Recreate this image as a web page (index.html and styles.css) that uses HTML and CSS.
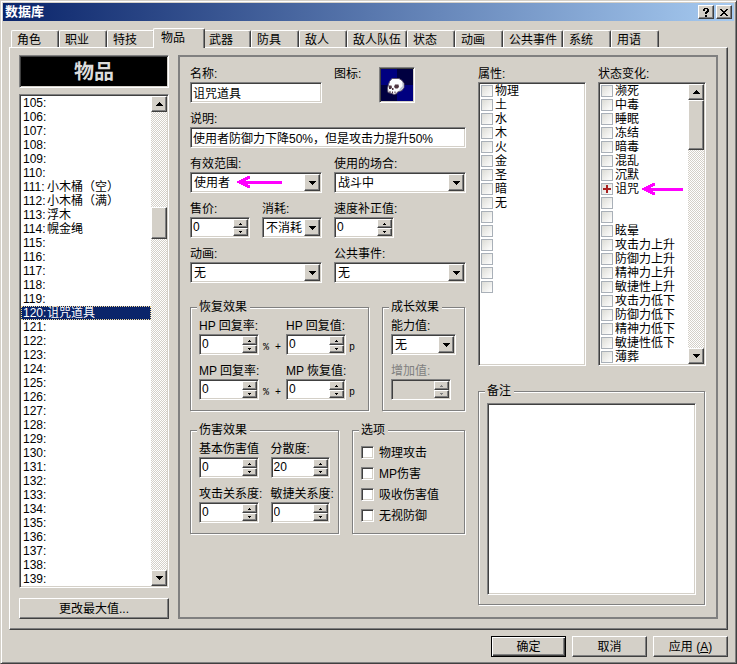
FILE: index.html
```html
<!DOCTYPE html>
<html lang="zh-CN">
<head>
<meta charset="utf-8">
<meta name="viewport" content="width=device-width, initial-scale=1">
<title>数据库</title>
<link rel="stylesheet" href="styles.css">
</head>
<body>
<svg class="sprite" aria-hidden="true">
  <symbol id="up" viewBox="0 0 7 4"><path d="M3 0h1v1h1v1h1v1h1v1H0V3h1V2h1V1h1z"/></symbol>
  <symbol id="down" viewBox="0 0 7 4"><path d="M0 0h7v1H6v1H5v1H4v1H3V3H2V2H1V1H0z"/></symbol>
  <symbol id="up-s" viewBox="0 0 3 2"><path d="M1 0h1v1h1v1H0V1h1z"/></symbol>
  <symbol id="down-s" viewBox="0 0 3 2"><path d="M0 0h3v1H2v1H1V1H0z"/></symbol>
</svg>
<div class="window">
  <header class="titlebar">
    <h1>数据库</h1>
    <button type="button" aria-label="帮助"><svg width="6" height="9" viewBox="0 0 6 9"><path d="M1 0h4v1h1v3H5v1H4v1H2V4h1V3h1V1H2v2H0V1h1zM2 7h2v2H2z"/></svg></button>
    <button type="button" aria-label="关闭"><svg width="8" height="7" viewBox="0 0 8 7"><path d="M0 0h2v1h1v1h2V1h1V0h2v1H7v1H6v1H5v1h1v1h1v1h1v1H6V6H5V5H3v1H2v1H0V6h1V5h1V4h1V3H2V2H1V1H0z"/></svg></button>
  </header>

  <main class="body">
    <div class="tabs" role="tablist">
      <button type="button" class="tab" role="tab">角色</button>
      <button type="button" class="tab" role="tab">职业</button>
      <button type="button" class="tab" role="tab">特技</button>
      <button type="button" class="tab selected" role="tab" aria-selected="true">物品</button>
      <button type="button" class="tab" role="tab">武器</button>
      <button type="button" class="tab" role="tab">防具</button>
      <button type="button" class="tab" role="tab">敌人</button>
      <button type="button" class="tab wide" role="tab">敌人队伍</button>
      <button type="button" class="tab" role="tab">状态</button>
      <button type="button" class="tab" role="tab">动画</button>
      <button type="button" class="tab wide" role="tab">公共事件</button>
      <button type="button" class="tab" role="tab">系统</button>
      <button type="button" class="tab" role="tab">用语</button>
    </div>

    <div class="page">
      <section class="sidebar">
        <h2 class="banner">物品</h2>
        <div class="listbox">
          <ol class="items">
            <li><b>105:</b></li>
            <li><b>106:</b></li>
            <li><b>107:</b></li>
            <li><b>108:</b></li>
            <li><b>109:</b></li>
            <li><b>110:</b></li>
            <li><b>111:</b>小木桶（空）</li>
            <li><b>112:</b>小木桶（满）</li>
            <li><b>113:</b>浮木</li>
            <li><b>114:</b>幌金绳</li>
            <li><b>115:</b></li>
            <li><b>116:</b></li>
            <li><b>117:</b></li>
            <li><b>118:</b></li>
            <li><b>119:</b></li>
            <li class="current"><b>120:</b>诅咒道具</li>
            <li><b>121:</b></li>
            <li><b>122:</b></li>
            <li><b>123:</b></li>
            <li><b>124:</b></li>
            <li><b>125:</b></li>
            <li><b>126:</b></li>
            <li><b>127:</b></li>
            <li><b>128:</b></li>
            <li><b>129:</b></li>
            <li><b>130:</b></li>
            <li><b>131:</b></li>
            <li><b>132:</b></li>
            <li><b>133:</b></li>
            <li><b>134:</b></li>
            <li><b>135:</b></li>
            <li><b>136:</b></li>
            <li><b>137:</b></li>
            <li><b>138:</b></li>
            <li><b>139:</b></li>
          </ol>
          <div class="scrollbar">
            <button type="button" aria-label="向上滚动"><svg width="7" height="4"><use href="#up"/></svg></button>
            <div class="track items-track"><div class="thumb"></div></div>
            <button type="button" aria-label="向下滚动"><svg width="7" height="4"><use href="#down"/></svg></button>
          </div>
        </div>
        <button type="button" class="button">更改最大值...</button>
      </section>

      <section class="panel">
        <div class="form">
          <div class="row halves">
            <div class="field"><label for="name">名称:</label><input class="text" id="name" type="text" value="诅咒道具"></div>
            <div class="icon-field">
              <span>图标:</span>
              <button type="button" class="icon-button" aria-label="图标">
                <svg width="32" height="32" viewBox="0 0 32 32">
                  <path fill="#000080" d="M0 0h16v16H0zM16 16h16v16H16z"/>
                  <path fill="#000040" d="M16 0h16v16H16zM0 16h16v16H0z"/>
                  <g class="smooth">
                    <path fill="#fafcff" stroke="#5c5068" d="M11 9.500h7l3 2 2 3v4l-2 3-3 1-2 1v1l-3 1-2-1-4-1-.5-4 1-4 1-3z"/>
                    <path fill="#b8c4d4" d="M21 12l1.500 3v3l-2 3-3 1 2-3 2-2z"/>
                    <path fill="#4c3440" d="M8 16.500h2.500l.5 2-1 1.500H8zM14 15.500h3.500l.5 2.500-1.500 1.500h-2L13 18z"/>
                    <path fill="#4c3440" d="M11 19h1.500v2H11zM8.500 22h1v2h-1zM11 22.500h1V24h-1zM13.500 22.500h1V24h-1z"/>
                  </g>
                </svg>
              </button>
            </div>
          </div>
          <div class="field"><label for="desc">说明:</label><input class="text" id="desc" type="text" value="使用者防御力下降50%，但是攻击力提升50%"></div>
          <div class="row halves">
            <div class="field"><label for="scope">有效范围:</label>
              <div class="combo"><select id="scope"><option>使用者</option></select><span class="drop"><svg width="7" height="4"><use href="#down"/></svg></span>
                <svg class="mark scope-mark" width="46" height="14" viewBox="0 0 46 14" aria-hidden="true"><path d="M45 7H3M13 2L2 7l11 5"/></svg></div></div>
            <div class="field"><label for="occasion">使用的场合:</label>
              <div class="combo"><select id="occasion"><option>战斗中</option></select><span class="drop"><svg width="7" height="4"><use href="#down"/></svg></span></div></div>
          </div>
          <div class="row quarters">
            <div class="field"><label for="price">售价:</label>
              <div class="spin"><input id="price" type="text" value="0"><div class="steps"><button type="button" aria-label="增加"><svg width="3" height="2"><use href="#up-s"/></svg></button><button type="button" aria-label="减少"><svg width="3" height="2"><use href="#down-s"/></svg></button></div></div></div>
            <div class="field"><label for="consume">消耗:</label>
              <div class="combo"><select id="consume"><option>不消耗</option></select><span class="drop"><svg width="7" height="4"><use href="#down"/></svg></span></div></div>
            <div class="field"><label for="speed">速度补正值:</label>
              <div class="spin"><input id="speed" type="text" value="0"><div class="steps"><button type="button" aria-label="增加"><svg width="3" height="2"><use href="#up-s"/></svg></button><button type="button" aria-label="减少"><svg width="3" height="2"><use href="#down-s"/></svg></button></div></div></div>
          </div>
          <div class="row halves">
            <div class="field"><label for="anim">动画:</label>
              <div class="combo"><select id="anim"><option>无</option></select><span class="drop"><svg width="7" height="4"><use href="#down"/></svg></span></div></div>
            <div class="field"><label for="event">公共事件:</label>
              <div class="combo"><select id="event"><option>无</option></select><span class="drop"><svg width="7" height="4"><use href="#down"/></svg></span></div></div>
          </div>

          <div class="groups">
            <div class="row recovery-row">
              <fieldset>
                <legend>恢复效果</legend>
                <div class="pair">
                  <div class="field"><label for="hp-rate">HP 回复率:</label>
                    <div class="spin"><input id="hp-rate" type="text" value="0"><div class="steps"><button type="button" aria-label="增加"><svg width="3" height="2"><use href="#up-s"/></svg></button><button type="button" aria-label="减少"><svg width="3" height="2"><use href="#down-s"/></svg></button></div></div></div>
                  <span class="unit plus">% +</span>
                  <div class="field"><label for="hp-value">HP 回复值:</label>
                    <div class="spin"><input id="hp-value" type="text" value="0"><div class="steps"><button type="button" aria-label="增加"><svg width="3" height="2"><use href="#up-s"/></svg></button><button type="button" aria-label="减少"><svg width="3" height="2"><use href="#down-s"/></svg></button></div></div></div>
                  <span class="unit">p</span>
                </div>
                <div class="pair">
                  <div class="field"><label for="mp-rate">MP 回复率:</label>
                    <div class="spin"><input id="mp-rate" type="text" value="0"><div class="steps"><button type="button" aria-label="增加"><svg width="3" height="2"><use href="#up-s"/></svg></button><button type="button" aria-label="减少"><svg width="3" height="2"><use href="#down-s"/></svg></button></div></div></div>
                  <span class="unit plus">% +</span>
                  <div class="field"><label for="mp-value">MP 恢复值:</label>
                    <div class="spin"><input id="mp-value" type="text" value="0"><div class="steps"><button type="button" aria-label="增加"><svg width="3" height="2"><use href="#up-s"/></svg></button><button type="button" aria-label="减少"><svg width="3" height="2"><use href="#down-s"/></svg></button></div></div></div>
                  <span class="unit">p</span>
                </div>
              </fieldset>
              <fieldset class="growth">
                <legend>成长效果</legend>
                <div class="field"><label for="stat">能力值:</label>
                  <div class="combo"><select id="stat"><option>无</option></select><span class="drop"><svg width="7" height="4"><use href="#down"/></svg></span></div></div>
                <div class="field disabled"><label for="gain">增加值:</label>
                  <div class="spin"><input id="gain" type="text" disabled><div class="steps"><button type="button" aria-label="增加" disabled><svg width="3" height="2"><use href="#up-s"/></svg></button><button type="button" aria-label="减少" disabled><svg width="3" height="2"><use href="#down-s"/></svg></button></div></div></div>
              </fieldset>
            </div>
            <div class="row damage-row">
              <fieldset>
                <legend>伤害效果</legend>
                <div class="pair spaced">
                  <div class="field"><label for="base">基本伤害值</label>
                    <div class="spin"><input id="base" type="text" value="0"><div class="steps"><button type="button" aria-label="增加"><svg width="3" height="2"><use href="#up-s"/></svg></button><button type="button" aria-label="减少"><svg width="3" height="2"><use href="#down-s"/></svg></button></div></div></div>
                  <div class="field"><label for="variance">分散度:</label>
                    <div class="spin"><input id="variance" type="text" value="20"><div class="steps"><button type="button" aria-label="增加"><svg width="3" height="2"><use href="#up-s"/></svg></button><button type="button" aria-label="减少"><svg width="3" height="2"><use href="#down-s"/></svg></button></div></div></div>
                </div>
                <div class="pair spaced">
                  <div class="field"><label for="atk-f">攻击关系度:</label>
                    <div class="spin"><input id="atk-f" type="text" value="0"><div class="steps"><button type="button" aria-label="增加"><svg width="3" height="2"><use href="#up-s"/></svg></button><button type="button" aria-label="减少"><svg width="3" height="2"><use href="#down-s"/></svg></button></div></div></div>
                  <div class="field"><label for="agi-f">敏捷关系度:</label>
                    <div class="spin"><input id="agi-f" type="text" value="0"><div class="steps"><button type="button" aria-label="增加"><svg width="3" height="2"><use href="#up-s"/></svg></button><button type="button" aria-label="减少"><svg width="3" height="2"><use href="#down-s"/></svg></button></div></div></div>
                </div>
              </fieldset>
              <fieldset class="options">
                <legend>选项</legend>
                <label><input type="checkbox">物理攻击</label>
                <label><input type="checkbox">MP伤害</label>
                <label><input type="checkbox">吸收伤害值</label>
                <label><input type="checkbox">无视防御</label>
              </fieldset>
            </div>
          </div>
        </div>

        <div class="side">
          <div class="lists">
            <div class="field"><span class="caption">属性:</span>
              <div class="listbox">
                <div class="checks">
                  <label><input type="checkbox">物理</label>
                  <label><input type="checkbox">土</label>
                  <label><input type="checkbox">水</label>
                  <label><input type="checkbox">木</label>
                  <label><input type="checkbox">火</label>
                  <label><input type="checkbox">金</label>
                  <label><input type="checkbox">圣</label>
                  <label><input type="checkbox">暗</label>
                  <label><input type="checkbox">无</label>
                  <label><input type="checkbox"></label>
                  <label><input type="checkbox"></label>
                  <label><input type="checkbox"></label>
                  <label><input type="checkbox"></label>
                  <label><input type="checkbox"></label>
                  <label><input type="checkbox"></label>
                </div>
              </div>
            </div>
            <div class="field"><span class="caption">状态变化:</span>
              <div class="listbox">
                <div class="checks">
                  <label><input type="checkbox">濒死</label>
                  <label><input type="checkbox">中毒</label>
                  <label><input type="checkbox">睡眠</label>
                  <label><input type="checkbox">冻结</label>
                  <label><input type="checkbox">暗毒</label>
                  <label><input type="checkbox">混乱</label>
                  <label><input type="checkbox">沉默</label>
                  <label class="marked"><input type="checkbox" checked>诅咒<svg class="mark state-mark" width="42" height="14" viewBox="0 0 42 14" aria-hidden="true"><path d="M41 7H3M13 2L2 7l11 5"/></svg></label>
                  <label><input type="checkbox"></label>
                  <label><input type="checkbox"></label>
                  <label><input type="checkbox">眩晕</label>
                  <label><input type="checkbox">攻击力上升</label>
                  <label><input type="checkbox">防御力上升</label>
                  <label><input type="checkbox">精神力上升</label>
                  <label><input type="checkbox">敏捷性上升</label>
                  <label><input type="checkbox">攻击力低下</label>
                  <label><input type="checkbox">防御力低下</label>
                  <label><input type="checkbox">精神力低下</label>
                  <label><input type="checkbox">敏捷性低下</label>
                  <label><input type="checkbox">薄葬</label>
                </div>
                <div class="scrollbar">
                  <button type="button" aria-label="向上滚动"><svg width="7" height="4"><use href="#up"/></svg></button>
                  <div class="track states-track"><div class="thumb"></div></div>
                  <button type="button" aria-label="向下滚动"><svg width="7" height="4"><use href="#down"/></svg></button>
                </div>
              </div>
            </div>
          </div>
          <fieldset class="memo">
            <legend>备注</legend>
            <textarea aria-label="备注"></textarea>
          </fieldset>
        </div>
      </section>
    </div>

    <footer class="actions">
      <button type="button" class="button default">确定</button>
      <button type="button" class="button">取消</button>
      <button type="button" class="button">应用 (<u>A</u>)</button>
    </footer>
  </main>
</div>
</body>
</html>
```
FILE: styles.css
```css
:root {
  --face: #d4d0c8;
  --light: #fff;
  --shadow: #808080;
  --dark: #404040;
  --navy: #0a246a;
}

* { box-sizing: border-box; }

body {
  margin: 0;
  background: var(--face);
  color: #000;
  font: 12px/14px "Liberation Sans", "Noto Sans CJK SC", sans-serif;
}

button, input, select, textarea {
  margin: 0;
  padding: 0;
  border: 0;
  border-radius: 0;
  background: none;
  color: inherit;
  font: inherit;
  appearance: none;
  outline: 0;
}

svg { display: block; shape-rendering: crispEdges; }
.smooth { shape-rendering: auto; }
.sprite { position: absolute; width: 0; height: 0; }

/* Window frame */
.window {
  min-height: 100vh;
  display: flex;
  flex-direction: column;
  padding: 1px;
  border: 1px solid;
  border-color: var(--face) var(--dark) var(--dark) var(--face);
  box-shadow: inset 1px 1px var(--light), inset -1px -1px var(--shadow);
  background: var(--face);
}

.titlebar {
  display: flex;
  align-items: center;
  gap: 2px;
  height: 18px;
  margin: 1px 1px 0;
  padding: 0 2px;
  background: linear-gradient(to right, #0a246a, #a6caf0);
}
.titlebar h1 {
  flex: 1;
  margin: 0;
  color: #fff;
  font-size: 13px;
  line-height: 18px;
  font-weight: 700;
}
.titlebar button { width: 16px; height: 14px; }

/* Raised and sunken edges */
.titlebar button, .scrollbar button, .thumb, .drop, .steps button, .button {
  display: flex;
  align-items: center;
  justify-content: center;
  background: var(--face);
  border: 1px solid;
  border-color: var(--light) var(--dark) var(--dark) var(--light);
  box-shadow: inset -1px -1px var(--shadow);
}
.text, .combo, .spin, .listbox, .banner, .icon-button, .memo textarea {
  border: 1px solid;
  border-color: var(--shadow) var(--light) var(--light) var(--shadow);
  box-shadow: inset 1px 1px var(--dark), inset -1px -1px var(--face);
  padding: 1px;
  background: #fff;
}

.body {
  flex: 1;
  display: flex;
  flex-direction: column;
  padding: 7px 7px 5px;
}

/* Tabs */
.tabs {
  display: flex;
  align-items: flex-end;
  height: 19px;
  padding-left: 2px;
}
.tab {
  width: 48px;
  height: 17px;
  padding: 2px 0 0 5px;
  border: 1px solid;
  border-color: var(--light) var(--dark) transparent var(--light);
  border-bottom: 0;
  border-radius: 2px 2px 0 0;
  box-shadow: inset -1px 0 var(--shadow);
  text-align: left;
  white-space: nowrap;
}
.tab.wide { width: 60px; }
.tab.selected {
  position: relative;
  width: 52px;
  height: 20px;
  margin: 0 -2px -1px;
  padding: 0 0 1px 7px;
  background: var(--face);
}

.page {
  flex: 1;
  display: flex;
  gap: 9px;
  padding: 7px 9px 10px;
  border: 1px solid;
  border-color: var(--light) var(--dark) var(--dark) var(--light);
  box-shadow: inset -1px -1px var(--shadow);
}

/* Item list */
.sidebar {
  width: 150px;
  display: flex;
  flex-direction: column;
}
.banner {
  height: 33px;
  margin: 0 0 6px;
  background: #000;
  color: #dcdcdc;
  font-size: 20px;
  line-height: 30px;
  font-weight: 700;
  text-align: center;
}
.listbox { display: flex; }
.items {
  flex: 1;
  margin: 0;
  padding: 0;
  list-style: none;
}
.items li {
  display: flex;
  height: 14px;
  padding-left: 2px;
  white-space: nowrap;
}
.items b { width: 24px; font-weight: 400; }
.items .current {
  background: var(--navy);
  color: #fff;
  outline: 1px dotted #f5db95;
  outline-offset: -1px;
}
.sidebar .button { margin-top: 10px; }

.scrollbar {
  width: 16px;
  display: flex;
  flex-direction: column;
}
.scrollbar button { height: 16px; }
.track {
  flex: 1;
  display: grid;
  background: repeating-conic-gradient(#fff 0 25%, var(--face) 0 50%) 0 0 / 2px 2px;
}
.thumb { grid-row: 2; }
.items-track { grid-template-rows: 95fr 32px 331fr; }
.states-track { grid-template-rows: 0 50px 1fr; }

.button {
  height: 21px;
  white-space: pre;
}

/* Editor panel */
.panel {
  flex: 1;
  display: grid;
  grid-template-columns: 276fr 228fr;
  gap: 12px;
  padding: 10px 10px 12px;
  border: 2px solid var(--shadow);
}
.form {
  display: flex;
  flex-direction: column;
  gap: 9px;
  min-width: 0;
}
.row { display: grid; gap: 12px; }
.halves { grid-template-columns: 1fr 1fr; }
.quarters { grid-template-columns: repeat(4, 1fr); }

.field { min-width: 0; }
.field > label, .caption {
  display: block;
  height: 15px;
  white-space: nowrap;
}
.text {
  display: block;
  width: 100%;
  height: 21px;
  padding: 1px 2px 2px;
}

.icon-field { display: flex; gap: 12px; }
.icon-field span { width: 33px; }
.icon-button { width: 36px; height: 36px; }

.combo, .spin {
  position: relative;
  display: flex;
  height: 21px;
}
.combo select {
  flex: 1;
  min-width: 0;
  padding: 0 0 0 2px;
}
.drop { width: 16px; }
.spin input {
  flex: 1;
  min-width: 0;
  padding: 0 0 2px 1px;
}
.steps {
  width: 15px;
  display: grid;
  grid-template-rows: 9px 8px;
}

.disabled { color: var(--shadow); fill: var(--shadow); }
.disabled .spin { background: var(--face); }

/* Etched group boxes */
.groups {
  display: flex;
  flex-direction: column;
  gap: 12px;
  margin-top: 8px;
}
.recovery-row { grid-template-columns: 180fr 84fr; }
.damage-row { grid-template-columns: 150fr 114fr; }
fieldset {
  min-width: 0;
  margin: 0 1px 0 0;
  padding: 4px 8px 10px;
  border: 1px solid var(--shadow);
  box-shadow: 1px 1px var(--light), inset 1px 1px var(--light);
}
legend {
  height: 15px;
  margin-left: -2px;
  padding: 0 3px 0 2px;
  background: var(--face);
}
.growth .disabled, .pair + .pair { margin-top: 9px; }
.growth .spin { width: 60px; }
.pair { display: flex; }
.pair .field { width: 60px; }
.pair.spaced { gap: 12px; }
.unit {
  align-self: flex-end;
  padding-left: 3px;
  font: 10px/14px "Liberation Mono", monospace;
}
.unit.plus { width: 27px; padding-left: 4px; white-space: nowrap; }

.options { padding-bottom: 0; }
.options label {
  display: flex;
  align-items: center;
  gap: 5px;
  height: 21px;
}
.options input {
  width: 13px;
  height: 13px;
  border: 1px solid;
  border-color: var(--shadow) var(--light) var(--light) var(--shadow);
  box-shadow: inset 1px 1px var(--dark), inset -1px -1px var(--face);
  background: #fff;
}
.options input:checked { background: var(--dark); }

/* Attribute and state lists */
.side { display: flex; flex-direction: column; gap: 18px; min-width: 0; }
.lists { display: grid; grid-template-columns: 1fr 1fr; gap: 12px; }
.lists .field { display: flex; flex-direction: column; }
.lists .listbox { flex: 1; }
.checks { flex: 1; }
.checks label {
  display: flex;
  align-items: center;
  gap: 2px;
  height: 14px;
  padding-left: 1px;
  white-space: nowrap;
}
.checks input {
  display: grid;
  place-items: center;
  width: 12px;
  height: 12px;
  border: 1px solid #a9b0b8;
  background: linear-gradient(135deg, #dcdcd6, #fff);
}
.checks input:checked::before {
  content: "";
  width: 8px;
  height: 8px;
  background:
    linear-gradient(#a82020, #a82020) center / 8px 2px no-repeat,
    linear-gradient(#a82020, #a82020) center / 2px 8px no-repeat;
}

.memo {
  flex: 1;
  display: flex;
  flex-direction: column;
  padding-bottom: 9px;
}
.memo textarea { flex: 1; width: 100%; resize: none; }

/* Arrows laid over the highlighted values */
.mark {
  position: absolute;
  pointer-events: none;
  fill: none;
  stroke: #f0f;
  stroke-width: 3px;
}
.marked { position: relative; }
.scope-mark { left: 46px; top: 2px; }
.state-mark { left: 42px; top: 0; }

.actions {
  display: flex;
  justify-content: flex-end;
  gap: 6px;
  padding-top: 6px;
}
.actions .button { width: 75px; }
.actions .default {
  border-color: #000;
  box-shadow: inset 1px 1px var(--light), inset -1px -1px var(--dark), inset -2px -2px var(--shadow);
}
```
